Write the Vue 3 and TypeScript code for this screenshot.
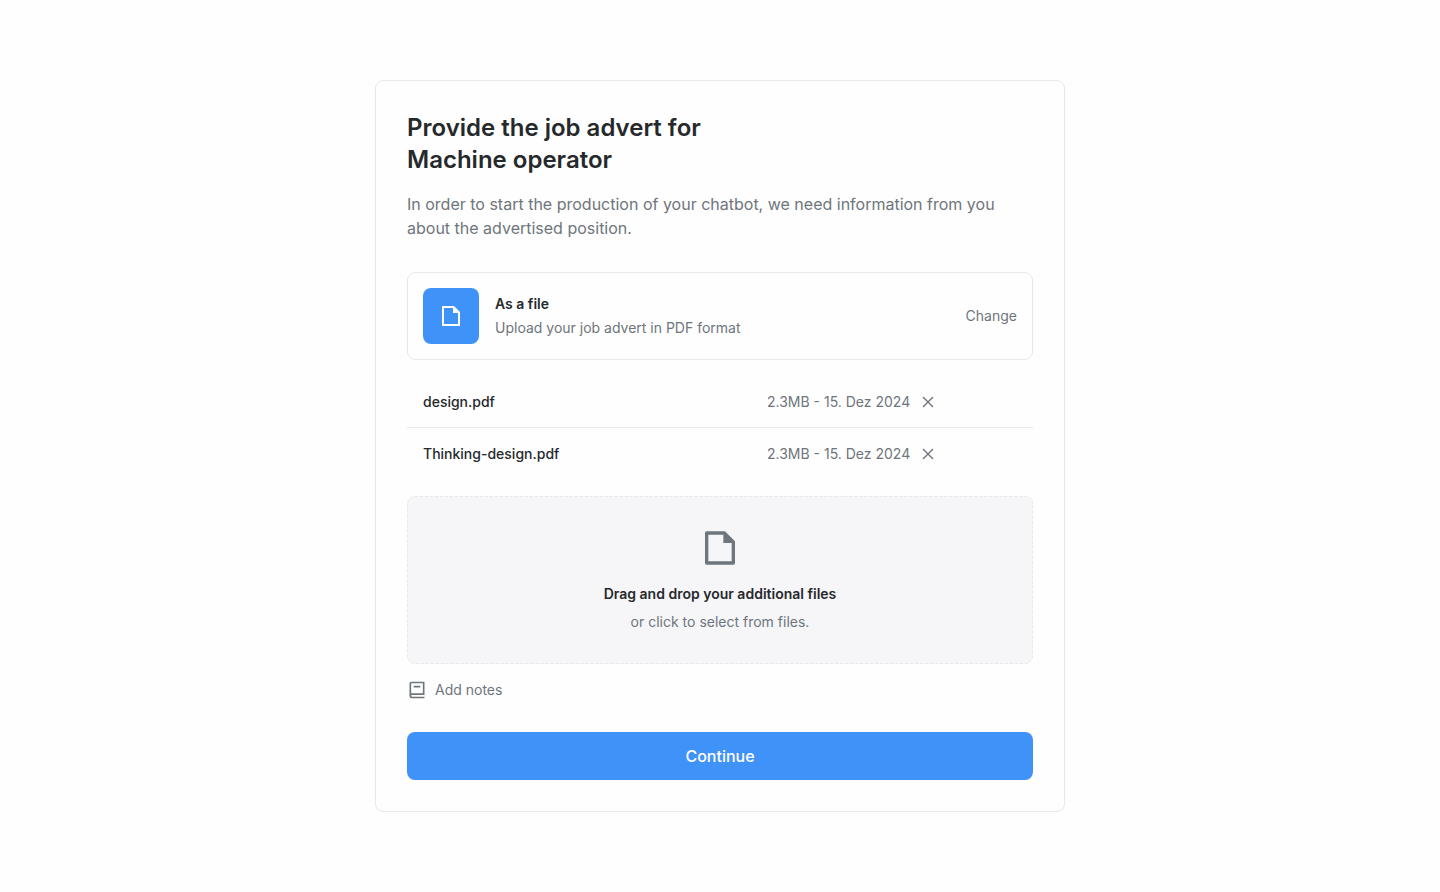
<script setup lang="ts">
import { ref } from 'vue'

interface UploadedFile {
  id: number
  name: string
  meta: string
}

const files = ref<UploadedFile[]>([
  { id: 1, name: 'design.pdf', meta: '2.3MB - 15. Dez 2024' },
  { id: 2, name: 'Thinking-design.pdf', meta: '2.3MB - 15. Dez 2024' },
])

function removeFile(id: number): void {
  files.value = files.value.filter((file) => file.id !== id)
}
</script>

<template>
  <main class="page">
    <section class="card">
      <h1 class="title">Provide the job advert for<br />Machine operator</h1>
      <p class="intro">
        In order to start the production of your chatbot, we need information from you about the
        advertised position.
      </p>

      <div class="method">
        <span class="method-icon">
          <svg width="24" height="24" viewBox="0 0 24 24" fill="currentColor" aria-hidden="true">
            <path d="M21 8v14H3V2h12l6 6zm-2 1h-5V4H5v16h14V9z" />
          </svg>
        </span>
        <div class="method-text">
          <h2 class="label">As a file</h2>
          <p class="hint">Upload your job advert in PDF format</p>
        </div>
        <button type="button" class="plain">Change</button>
      </div>

      <ul class="files">
        <li v-for="file in files" :key="file.id" class="file">
          <span class="file-name">{{ file.name }}</span>
          <span class="file-info">
            <span>{{ file.meta }}</span>
            <button
              type="button"
              class="remove"
              :aria-label="`Remove ${file.name}`"
              @click="removeFile(file.id)"
            >
              <svg
                width="20"
                height="20"
                viewBox="0 0 20 20"
                fill="none"
                stroke="currentColor"
                stroke-width="1.4"
                aria-hidden="true"
              >
                <path d="M5 5l10 10M15 5L5 15" />
              </svg>
            </button>
          </span>
        </li>
      </ul>

      <button type="button" class="dropzone">
        <svg width="40" height="40" viewBox="0 0 24 24" fill="currentColor" aria-hidden="true">
          <path
            d="M21 8v12.993A1 1 0 0 1 20.007 22H3.993A.993.993 0 0 1 3 21.008V2.992C3 2.455 3.449 2 4.002 2h10.995L21 8zm-2 1h-5V4H5v16h14V9z"
          />
        </svg>
        <span class="label drop-label">Drag and drop your additional files</span>
        <span class="hint">or click to select from files.</span>
      </button>

      <button type="button" class="plain notes">
        <svg width="20" height="20" viewBox="0 0 24 24" fill="currentColor" aria-hidden="true">
          <path
            d="M21 18H6a1 1 0 0 0 0 2h15v2H6a3 3 0 0 1-3-3V4a2 2 0 0 1 2-2h16v16zM5 16.05c.162-.033.329-.05.5-.05H19V4H5v12.05zM16 9H8V7h8v2z"
          />
        </svg>
        Add notes
      </button>

      <button type="button" class="continue">Continue</button>
    </section>
  </main>
</template>

<style>
body {
  margin: 0;
  background: #fefefe;
}
</style>

<style scoped>
.page {
  display: flex;
  justify-content: center;
  box-sizing: border-box;
  min-height: 100vh;
  padding: 80px 24px;
  background: #fefefe;
  font-family: Inter, "Liberation Sans", sans-serif;
  font-size: 14px;
  line-height: 20px;
  color: #6e757c;
}

.card {
  display: flex;
  flex-direction: column;
  box-sizing: border-box;
  width: 100%;
  max-width: 690px;
  padding: 31px;
  border: 1px solid #e6e8ea;
  border-radius: 8px;
}

h1,
h2,
p,
ul {
  margin: 0;
  padding: 0;
}

button {
  margin: 0;
  padding: 0;
  border: 0;
  background: none;
  color: inherit;
  font: inherit;
  cursor: pointer;
}

svg {
  display: block;
  flex: none;
}

.title {
  color: #26292c;
  font-size: 24px;
  font-weight: 600;
  line-height: 32px;
}

.intro {
  margin-top: 16px;
  font-size: 16px;
  line-height: 24px;
}

.method {
  display: flex;
  align-items: center;
  gap: 16px;
  margin-top: 32px;
  padding: 15px;
  border: 1px solid #e6e8ea;
  border-radius: 8px;
}

.method-icon {
  display: grid;
  place-items: center;
  width: 56px;
  height: 56px;
  border-radius: 8px;
  background: #3f93f8;
  color: #fff;
}

.method-text {
  display: grid;
  flex: 1;
  gap: 4px;
}

.label {
  color: #26292c;
  font-size: 14px;
  font-weight: 600;
  line-height: 20px;
}

.files {
  margin: 16px 0;
  list-style: none;
}

.file {
  display: grid;
  grid-template-columns: 1fr 250px;
  align-items: center;
  padding: 16px;
}

.file:not(:last-child) {
  border-bottom: 1px solid #e6e8ea;
  padding-bottom: 15px;
}

.file-name {
  color: #26292c;
  font-weight: 500;
}

.file-info {
  display: flex;
  align-items: center;
  gap: 8px;
}

.dropzone {
  display: flex;
  flex-direction: column;
  align-items: center;
  padding: 31px;
  border: 1px dashed #e6e8ea;
  border-radius: 8px;
  background: #f6f6f8;
}

.drop-label {
  margin: 16px 0 8px;
}

.notes {
  display: flex;
  align-self: flex-start;
  align-items: center;
  gap: 8px;
  margin: 16px 0 32px;
}

.continue {
  padding: 12px;
  border-radius: 8px;
  background: #3f93f8;
  color: #fff;
  font-size: 16px;
  font-weight: 500;
  line-height: 24px;
}
</style>
